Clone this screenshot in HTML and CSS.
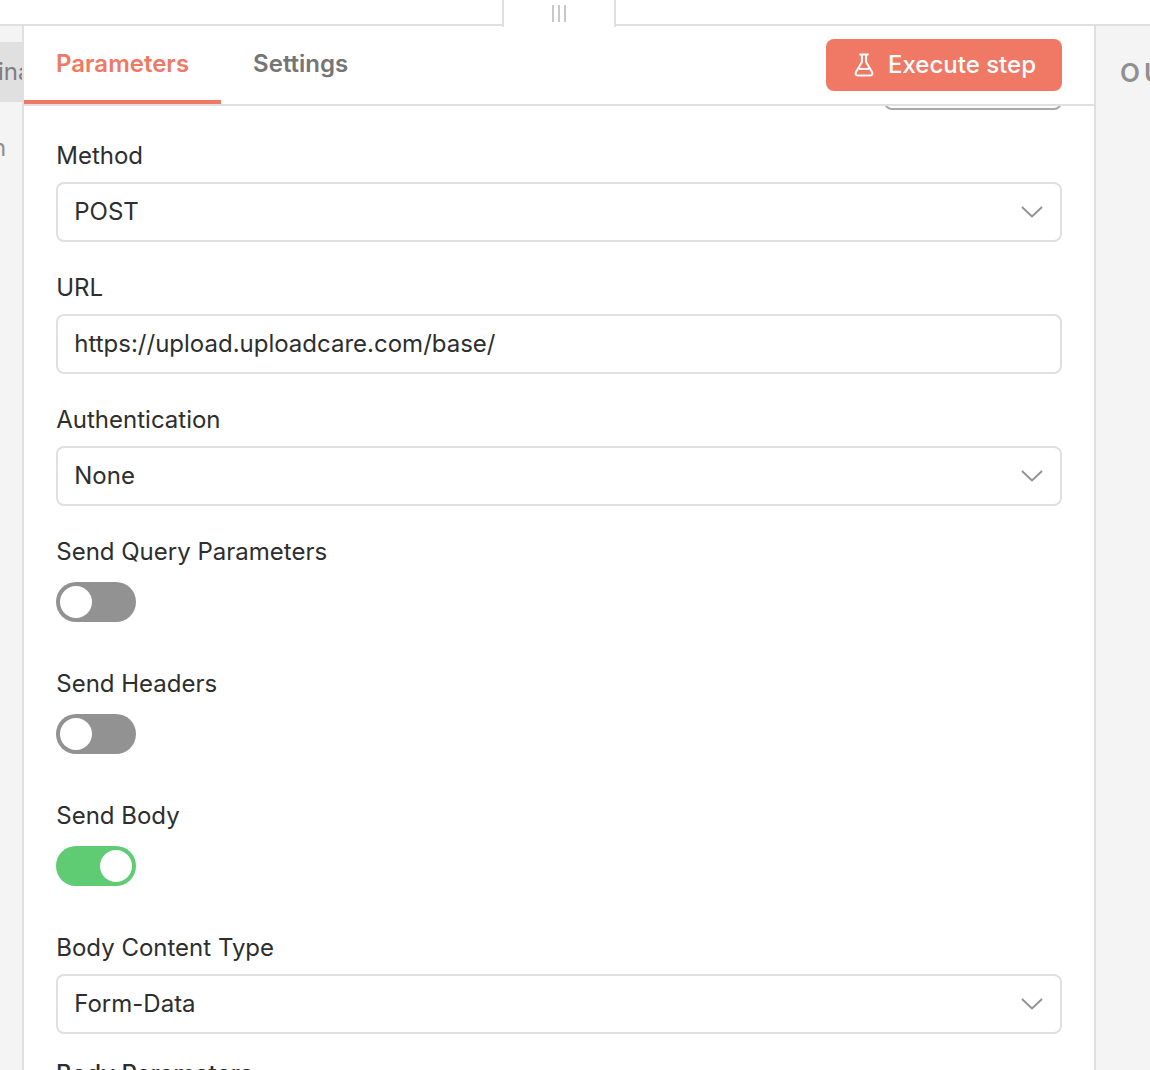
FILE: index.html
```html
<!DOCTYPE html>
<html lang="en">
<head>
    <meta charset="UTF-8">
    <meta name="viewport" content="width=device-width, initial-scale=1.0">
    <title>HTTP Request</title>
    <link rel="stylesheet" href="styles.css">
</head>
<body>
    <div class="topbar">
        <div class="drag-handle"><span></span><span></span><span></span></div>
    </div>
    <div class="layout">
        <aside class="input-panel">
            <div class="input-tab">ina</div>
            <div class="input-text">n</div>
        </aside>
        <main class="panel">
            <div class="panel-header">
                <nav class="tabs">
                    <div class="tab active">Parameters</div>
                    <div class="tab">Settings</div>
                </nav>
                <button class="execute">
                    <svg width="20" height="24" viewBox="0 0 20 24" fill="none" stroke="#fff" stroke-width="2" stroke-linejoin="round">
                        <path d="M5.300 1.500h9.400M7.900 1.500v7.500L2 19Q.5 22.500 4 22.500h12q3.500 0 2-3.500L12.100 9V1.500M5.200 16h9.600"/>
                    </svg>
                    <span>Execute step</span>
                </button>
            </div>
            <div class="panel-body">
                <div class="import-button"></div>
                <div class="field">
                    <label>Method</label>
                    <div class="input">POST
                        <svg class="chevron" width="22" height="12" viewBox="0 0 22 12"><path d="M1 1l10 9.500L21 1"/></svg>
                    </div>
                </div>
                <div class="field">
                    <label>URL</label>
                    <div class="input">https://upload.uploadcare.com/base/</div>
                </div>
                <div class="field">
                    <label>Authentication</label>
                    <div class="input">None
                        <svg class="chevron" width="22" height="12" viewBox="0 0 22 12"><path d="M1 1l10 9.500L21 1"/></svg>
                    </div>
                </div>
                <div class="field">
                    <label>Send Query Parameters</label>
                    <div class="switch"></div>
                </div>
                <div class="field">
                    <label>Send Headers</label>
                    <div class="switch"></div>
                </div>
                <div class="field">
                    <label>Send Body</label>
                    <div class="switch on"></div>
                </div>
                <div class="field">
                    <label>Body Content Type</label>
                    <div class="input">Form-Data
                        <svg class="chevron" width="22" height="12" viewBox="0 0 22 12"><path d="M1 1l10 9.500L21 1"/></svg>
                    </div>
                </div>
                <div class="section-title">Body Parameters</div>
            </div>
        </main>
        <aside class="output-panel">OUTPUT</aside>
    </div>
</body>
</html>
```
FILE: styles.css
```css
* {
    box-sizing: border-box;
}
body {
    margin: 0;
    height: 100vh;
    overflow: hidden;
    display: flex;
    flex-direction: column;
    font-family: Inter, sans-serif;
    font-size: 24px;
    line-height: 30px;
    color: #2d2e2e;
    background-color: #fff;
}
.topbar {
    height: 26px;
    flex-shrink: 0;
    display: flex;
    padding-left: 502px;
    border-bottom: 2px solid #e0e0e0;
}
.drag-handle {
    position: relative;
    z-index: 1;
    width: 114px;
    height: 27px;
    display: flex;
    justify-content: center;
    gap: 4px;
    padding-top: 5px;
    border: solid #e0e0e0;
    border-width: 0 2px;
    background-color: #fff;
}
.drag-handle span {
    width: 2px;
    height: 17px;
    background-color: #c8c8c8;
}
.layout {
    flex: 1;
    min-height: 0;
    display: flex;
}
.input-panel {
    width: 22px;
    padding-top: 16px;
    overflow: hidden;
    color: #7d7d7d;
    background-color: #f4f4f4;
}
.input-tab {
    height: 60px;
    line-height: 60px;
    text-indent: -2px;
    background-color: #e0e0e0;
}
.input-text {
    margin: 31px 0 0 -8px;
    color: #909090;
}
.panel {
    width: 1074px;
    display: flex;
    flex-direction: column;
    overflow: hidden;
    border: solid #e0e0e0;
    border-width: 0 2px;
    background-color: #fff;
}
.panel-header {
    height: 80px;
    flex-shrink: 0;
    display: flex;
    justify-content: space-between;
    align-items: center;
    padding-right: 32px;
    border-bottom: 2px solid #e0e0e0;
}
.tabs {
    display: flex;
    align-self: stretch;
}
.tab {
    padding: 23px 32px 0;
    font-weight: 600;
    color: #757575;
}
.tab.active {
    color: #ef7964;
    border-bottom: 4px solid #ef7964;
}
.execute {
    width: 236px;
    height: 52px;
    display: flex;
    justify-content: center;
    align-items: center;
    gap: 14px;
    padding: 0 0 0 2px;
    border: none;
    border-radius: 8px;
    font: 500 24px Inter, sans-serif;
    color: #fff;
    background-color: #ef7964;
}
.execute span {
    padding-bottom: 2px;
}
.panel-body {
    padding: 0 32px;
    overflow: hidden;
}
.import-button {
    width: 178px;
    height: 40px;
    margin: -36px 0 31px auto;
    border: 2px solid #a8a8a8;
    border-radius: 8px;
}
.field {
    height: 132px;
}
.field label {
    display: block;
    margin-bottom: 11px;
    text-indent: 0.25px;
}
.input {
    height: 60px;
    display: flex;
    justify-content: space-between;
    align-items: center;
    padding: 0 17px 0 16.25px;
    border: 2px solid #e0e0e0;
    border-radius: 8px;
}
.chevron {
    fill: none;
    stroke: #909090;
    stroke-width: 1.8;
}
.switch {
    width: 80px;
    height: 40px;
    margin-top: 15px;
    padding: 4px;
    border-radius: 20px;
    background-color: #929292;
}
.switch::before {
    content: "";
    display: block;
    width: 32px;
    height: 32px;
    border-radius: 50%;
    background-color: #fff;
}
.switch.on {
    background-color: #5fcc74;
}
.switch.on::before {
    margin-left: auto;
}
.section-title {
    margin-top: -6px;
    font-weight: 500;
}
.output-panel {
    flex: 1;
    padding: 31px 0 0 24px;
    overflow: hidden;
    font-size: 26px;
    font-weight: 600;
    line-height: 32px;
    letter-spacing: 4px;
    color: #909090;
    background-color: #f4f4f4;
}
```
